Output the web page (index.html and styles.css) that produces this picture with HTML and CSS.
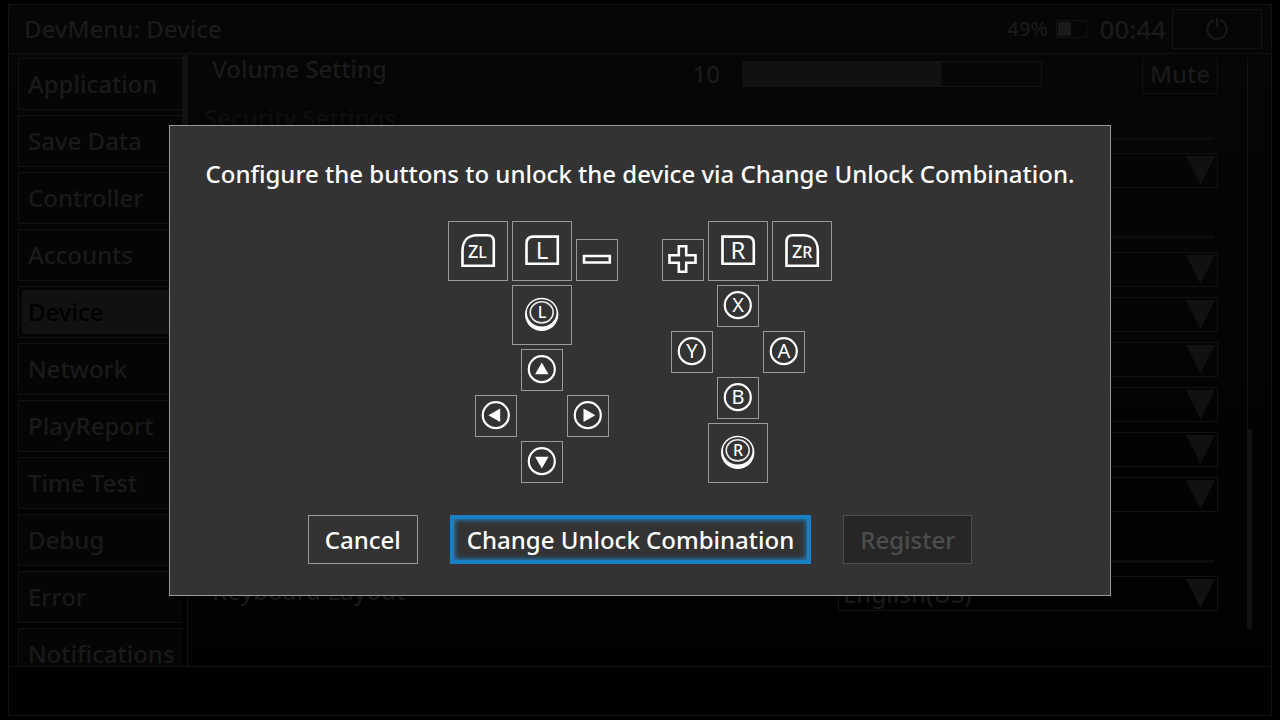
FILE: index.html
```html
<!DOCTYPE html>
<html lang="en">
<head>
<meta charset="utf-8">
<title>DevMenu: Device</title>
<link rel="stylesheet" href="styles.css">
</head>
<body>
<div class="frame">
  <header class="topbar">
    <h1 class="topbar-title">DevMenu: Device</h1>
    <span class="battery-level">49%</span>
    <svg class="battery" width="32" height="18" viewBox="0 0 32 18" aria-hidden="true"><path class="battery-case" d="M30.500 6V.5H.5V17.500H30.500V12M30.500 6.500H32M30.500 11.500H32"/><path class="battery-fill" d="M2 2H15V16H2Z"/></svg>
    <time class="clock">00:44</time>
    <button class="power" aria-label="Power"><svg width="24" height="24" viewBox="0 0 24 24" aria-hidden="true"><path d="M9 3.200A9.600 9.600 0 1 0 15 3.200M12 1V10"/></svg></button>
  </header>
  <div class="middle">
    <nav class="sidebar">
      <div class="nav-list">
        <button class="nav-item">Application</button>
        <button class="nav-item">Save Data</button>
        <button class="nav-item">Controller</button>
        <button class="nav-item">Accounts</button>
        <button class="nav-item selected"><span>Device</span></button>
        <button class="nav-item">Network</button>
        <button class="nav-item">PlayReport</button>
        <button class="nav-item">Time Test</button>
        <button class="nav-item">Debug</button>
        <button class="nav-item">Error</button>
        <button class="nav-item">Notifications</button>
      </div>
      <div class="nav-scroll"></div>
    </nav>
    <main class="content">
      <div class="settings">
        <div class="row">
          <label class="row-label" for="volume">Volume Setting</label>
          <output class="volume-value" for="volume">10</output>
          <input class="volume" id="volume" type="range" min="0" max="15" value="10">
          <button class="mute">Mute</button>
        </div>
        <h2 class="section">Security Settings</h2>
        <div class="row"><div class="picker"><select aria-label="Security option"></select></div></div>
        <div class="section"></div>
        <div class="row"><div class="picker"><select aria-label="Option 1"></select></div></div>
        <div class="row"><div class="picker"><select aria-label="Option 2"></select></div></div>
        <div class="row"><div class="picker"><select aria-label="Option 3"></select></div></div>
        <div class="row"><div class="picker"><select aria-label="Option 4"></select></div></div>
        <div class="row"><div class="picker"><select aria-label="Option 5"></select></div></div>
        <div class="row"><div class="picker"><select aria-label="Option 6"></select></div></div>
        <div class="section"></div>
        <div class="row">
          <label class="row-label" for="keyboard">Keyboard Layout</label>
          <div class="picker"><select id="keyboard"><option>English(US)</option></select></div>
        </div>
      </div>
      <div class="scroll"><div class="scroll-thumb"></div></div>
    </main>
  </div>
  <footer class="bottombar"></footer>
</div>

<div class="overlay">
  <section class="dialog" role="dialog" aria-labelledby="dialog-title">
    <h2 class="dialog-title" id="dialog-title">Configure the buttons to unlock the device via Change Unlock Combination.</h2>
    <div class="pads">
      <div class="pad">
        <div class="shoulders">
          <button class="key large" aria-label="ZL"><svg viewBox="0 0 58 58"><path class="line" d="M13.500 43.700V29C13.500 19 19 13.300 28 13.300H38.500Q44.800 13.300 44.800 20V43.700Z"/><text class="glyph z" x="19" y="36">Z<tspan class="small">L</tspan></text></svg></button>
          <button class="key large" aria-label="L"><svg viewBox="0 0 58 58"><path class="line" d="M13.500 41.700V21.500Q13.500 14.600 20.500 14.600H44.800V41.700Z"/><text class="glyph big mid" x="29" y="37">L</text></svg></button>
          <button class="key" aria-label="Minus"><svg viewBox="0 0 40 40"><path class="line" d="M7 16H32.800V22.500H7Z"/></svg></button>
        </div>
        <button class="key large" aria-label="Left stick"><svg viewBox="0 0 58 58"><circle class="solid" cx="28.700" cy="28.400" r="16.700"/><ellipse class="hole" cx="28.700" cy="26.800" rx="14.800" ry="13.600"/><ellipse class="ring" cx="28.700" cy="26.300" rx="11.500" ry="10.600"/><text class="glyph stick mid" x="29" y="32">L</text></svg></button>
        <div class="cross">
          <button class="key up" aria-label="Up"><svg viewBox="0 0 40 40"><circle class="round" cx="19.800" cy="19.200" r="13"/><path class="solid" d="M19.800 12.500L26.500 24.200H13.100Z"/></svg></button>
          <button class="key left" aria-label="Left"><svg viewBox="0 0 40 40"><circle class="round" cx="19.800" cy="19.200" r="13"/><path class="solid" d="M12.400 19.300L24.200 12.500V26.100Z"/></svg></button>
          <button class="key right" aria-label="Right"><svg viewBox="0 0 40 40"><circle class="round" cx="19.800" cy="19.200" r="13"/><path class="solid" d="M27.300 19.300L15.500 12.500V26.100Z"/></svg></button>
          <button class="key down" aria-label="Down"><svg viewBox="0 0 40 40"><circle class="round" cx="19.800" cy="19.200" r="13"/><path class="solid" d="M19.800 26.500L26.500 14.800H13.100Z"/></svg></button>
        </div>
      </div>
      <div class="pad">
        <div class="shoulders">
          <button class="key inner" aria-label="Plus"><svg viewBox="0 0 40 40"><path class="line" d="M15.800 6.200H23.200V15.300H32.500V22.700H23.200V31.800H15.800V22.700H6.500V15.300H15.800Z"/></svg></button>
          <button class="key large" aria-label="R"><svg viewBox="0 0 58 58"><path class="line" d="M13.500 14.600H37.800Q44.800 14.600 44.800 21.500V41.700H13.500Z"/><text class="glyph big mid" x="29" y="37">R</text></svg></button>
          <button class="key large" aria-label="ZR"><svg viewBox="0 0 58 58"><path class="line" d="M13.500 43.700V20Q13.500 13.300 19.800 13.300H30.300C39.300 13.300 44.800 19 44.800 29V43.700Z"/><text class="glyph z" x="19" y="36">Z<tspan class="small">R</tspan></text></svg></button>
        </div>
        <div class="cross">
          <button class="key up" aria-label="X"><svg viewBox="0 0 40 40"><circle class="round" cx="19.800" cy="19.200" r="13"/><text class="glyph face mid" x="20" y="26">X</text></svg></button>
          <button class="key left" aria-label="Y"><svg viewBox="0 0 40 40"><circle class="round" cx="19.800" cy="19.200" r="13"/><text class="glyph face mid" x="20" y="26">Y</text></svg></button>
          <button class="key right" aria-label="A"><svg viewBox="0 0 40 40"><circle class="round" cx="19.800" cy="19.200" r="13"/><text class="glyph face mid" x="20" y="26">A</text></svg></button>
          <button class="key down" aria-label="B"><svg viewBox="0 0 40 40"><circle class="round" cx="19.800" cy="19.200" r="13"/><text class="glyph face mid" x="20" y="26">B</text></svg></button>
        </div>
        <button class="key large" aria-label="Right stick"><svg viewBox="0 0 58 58"><circle class="solid" cx="28.700" cy="28.400" r="16.700"/><ellipse class="hole" cx="28.700" cy="26.800" rx="14.800" ry="13.600"/><ellipse class="ring" cx="28.700" cy="26.300" rx="11.500" ry="10.600"/><text class="glyph stick mid" x="29" y="32">R</text></svg></button>
      </div>
    </div>
    <div class="actions">
      <button class="action">Cancel</button>
      <button class="action focused">Change Unlock Combination</button>
      <button class="action" disabled>Register</button>
    </div>
  </section>
</div>
</body>
</html>
```
FILE: styles.css
```css
:root {
  --line: #121212;
  --dim: #1a1a1a;
  --fill: #111;
  --panel: #333;
  --edge: #999;
}
* { box-sizing: border-box; }
body {
  margin: 0;
  height: 100vh;
  padding: 4px 8px;
  overflow: hidden;
  background: #000;
  color: var(--dim);
  font: 500 24px/32px "Noto Sans", sans-serif;
}
h1, h2 { margin: 0; font: inherit; }
button, select {
  margin: 0;
  padding: 0;
  border: 1px solid var(--line);
  border-radius: 0;
  background: none;
  color: inherit;
  font: inherit;
}
svg { display: block; }

.frame {
  height: 100%;
  display: flex;
  flex-direction: column;
  border: 1px solid var(--line);
  background: linear-gradient(#060606, #040404 40%, #010101 90%);
}
.topbar {
  flex: none;
  height: 49px;
  display: flex;
  align-items: center;
  padding: 0 9px 0 15px;
  border-bottom: 1px solid var(--line);
}
.topbar-title { flex: 1; }
.battery-level { font-size: 20px; margin-right: 9px; }
.battery { margin-right: 11px; }
.battery-case { fill: none; stroke: var(--line); }
.battery-fill { fill: var(--dim); }
.clock { font-size: 26px; margin-right: 6px; }
.power {
  width: 90px;
  height: 40px;
  display: grid;
  place-items: center;
}
.power path { fill: none; stroke: var(--dim); stroke-width: 2; }

.middle { flex: 1; min-height: 0; display: flex; }
.sidebar {
  flex: none;
  width: 179px;
  display: flex;
  padding-left: 9px;
  border-right: 1px solid var(--line);
}
.nav-list {
  flex: 1;
  display: flex;
  flex-direction: column;
  gap: 5px;
  padding-top: 4px;
  overflow: hidden;
}
.nav-item {
  flex: none;
  height: 52px;
  padding: 0 9px;
  border-right: 0;
  background: #050505;
  text-align: left;
}
.nav-item.selected { padding: 3px 0 3px 3px; color: #000; }
.nav-item.selected span {
  display: block;
  padding: 6px;
  background: var(--fill);
}
.nav-scroll { width: 5px; height: 240px; margin-top: 1px; background: var(--fill); }

.content {
  flex: 1;
  min-width: 0;
  display: flex;
  gap: 29px;
  padding: 4px 19px 0 16px;
}
.settings { flex: 1; overflow: hidden; }
.settings .row:first-child { margin-top: -4px; }
.row { height: 45px; display: flex; align-items: flex-start; }
.row-label { flex: 1; padding-left: 8px; line-height: 30px; }
.section {
  height: 54px;
  color: #0e0e0e;
  line-height: 38px;
}
.section::after {
  content: "";
  display: block;
  height: 3px;
  margin-right: 4px;
  background: #0c0c0c;
}
.section:empty { padding-top: 38px; }
.volume-value { line-height: 40px; margin-right: 22px; }
.volume {
  appearance: none;
  width: 300px;
  height: 26px;
  margin: 7px 100px 0 0;
  border: 1px solid var(--line);
  background: linear-gradient(var(--fill), var(--fill)) left / 66.67% 100% no-repeat;
}
.volume::-webkit-slider-thumb { appearance: none; width: 0; }
.mute { width: 76px; height: 40px; }
.picker {
  position: relative;
  width: 380px;
  height: 35px;
  margin-left: auto;
}
.picker select {
  appearance: none;
  width: 100%;
  height: 100%;
  padding-left: 4px;
}
.picker::after {
  content: "";
  position: absolute;
  top: 3px;
  right: 3px;
  width: 29px;
  height: 29px;
  background: var(--fill);
  clip-path: polygon(0 0, 100% 0, 50% 100%);
  pointer-events: none;
}
.scroll {
  width: 5px;
  margin-bottom: 37px;
  display: flex;
  flex-direction: column;
  justify-content: flex-end;
  border-left: 1px solid var(--line);
}
.scroll-thumb { height: 35%; background: var(--fill); }
.bottombar { flex: none; height: 49px; border-top: 1px solid var(--line); }

.overlay {
  position: fixed;
  inset: 0;
  display: grid;
  place-items: center;
  padding: 1px 32px 0;
}
.dialog {
  width: 100%;
  max-width: 942px;
  display: flex;
  flex-direction: column;
  align-items: center;
  gap: 32px;
  padding: 32px 24px 31px;
  border: 1px solid var(--edge);
  background: var(--panel);
  color: #fff;
}
.dialog-title { line-height: 31px; text-align: center; }
.pads { display: flex; gap: 8px; }
.pad {
  display: flex;
  flex-direction: column;
  align-items: center;
  gap: 4px;
}
.shoulders {
  display: grid;
  grid-template-columns: repeat(3, 60px);
  align-items: end;
  gap: 4px;
}
.cross {
  display: grid;
  grid-template: ". up ." 42px "left . right" 42px ". down ." 42px / 42px 42px 42px;
  gap: 4px;
}
.up { grid-area: up; }
.left { grid-area: left; }
.right { grid-area: right; }
.down { grid-area: down; }
.key { width: 42px; height: 42px; border-color: var(--edge); }
.key.large { width: 60px; height: 60px; }
.key.inner { justify-self: end; }
.line { fill: none; stroke: #fff; stroke-width: 2.600; }
.round { fill: none; stroke: #fff; stroke-width: 2.200; }
.ring { fill: none; stroke: #e6e6e6; stroke-width: 1.600; }
.solid { fill: #fff; }
.hole { fill: var(--panel); }
.glyph { fill: #fff; font-size: 20px; font-weight: 400; }
.glyph.mid { text-anchor: middle; }
.glyph.big { font-size: 24px; }
.glyph.stick { font-size: 16px; font-weight: 500; }
.glyph.z { font-size: 18px; font-weight: 500; }
.glyph .small { font-size: 16px; }

.actions { display: flex; gap: 32px; }
.action {
  height: 49px;
  padding: 0 16px;
  border-color: var(--edge);
}
.action.focused {
  border-color: #1a80c4;
  box-shadow: inset 0 0 0 3px #1a80c4, inset 0 0 5px 4px #1a80c4;
}
.action:disabled {
  border-color: #4d4d4d;
  background: #262626;
  color: #4d4d4d;
}
```
